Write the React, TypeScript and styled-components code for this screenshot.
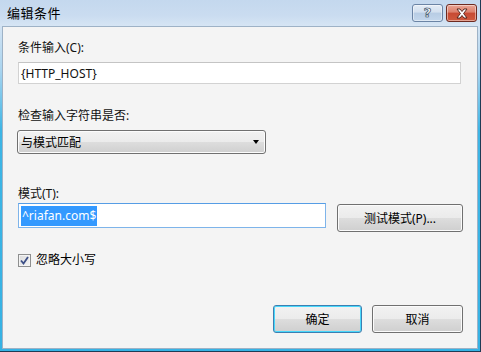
import React from 'react';
import styled, { createGlobalStyle } from 'styled-components';

const GlobalStyle = createGlobalStyle`
  html, body {
    margin: 0;
    padding: 0;
    background: #ffffff;
  }
  body {
    font-family: 'Noto Sans', 'Noto Sans CJK SC', sans-serif;
    font-size: 12px;
    color: #000;
  }
`;

const Window = styled.div`
  width: 481px;
  height: 352px;
  box-sizing: border-box;
  display: flex;
  flex-direction: column;
  border-right: 1px solid #1f3b55;
  border-bottom: 1px solid #1f3b55;
  background: linear-gradient(
    180deg,
    #c3d8ee 0px,
    #d3e3f3 26px,
    #a9d4ef 70px,
    #3db5e5 130px,
    #36b2e4 100%
  );
`;

const TitleBar = styled.div`
  height: 26px;
  flex: none;
  display: flex;
  align-items: flex-start;
  justify-content: space-between;
  padding: 0 3px 0 7px;
  background: linear-gradient(180deg, #c4d8ee 0%, #cadcf0 60%, #d6e5f4 100%);
`;

const Title = styled.div`
  font-family: 'Noto Sans CJK SC', sans-serif;
  font-size: 13px;
  line-height: 26px;
  color: #000;
  letter-spacing: 0.5px;
`;

const CaptionButtons = styled.div`
  display: flex;
  gap: 3px;
  margin-top: 4px;
`;

const CaptionButton = styled.div<{ $close?: boolean }>`
  width: 31px;
  height: 18px;
  box-sizing: border-box;
  border-radius: 3px;
  display: flex;
  align-items: center;
  justify-content: center;
  border: 1px solid ${(p) => (p.$close ? '#6d2a20' : '#6b84a5')};
  box-shadow: inset 0 0 0 1px rgba(255, 255, 255, 0.45);
  background: ${(p) =>
    p.$close
      ? 'linear-gradient(180deg, #e9a596 0%, #dc806c 45%, #c74a33 50%, #cf5a3e 100%)'
      : 'linear-gradient(180deg, #e4ecf6 0%, #d3e0ef 45%, #b7cce4 50%, #c4d7ec 100%)'};
`;

const HelpGlyph = styled.span`
  font-family: 'DejaVu Sans', sans-serif;
  font-weight: bold;
  font-size: 13px;
  line-height: 14px;
  color: #ffffff;
  -webkit-text-stroke: 0.6px #3b4c66;
  text-shadow: 0 0 1px #3b4c66;
`;

const Client = styled.div`
  flex: 1;
  margin: 0 2px 2px 2px;
  border: 1px solid #9eb2c6;
  background: #f4f4f4;
  display: flex;
  flex-direction: column;
  padding: 13px 14px 15px 15px;
`;

const Label = styled.div<{ $gap: number }>`
  margin-top: ${(p) => p.$gap}px;
  height: 16px;
  line-height: 16px;
  font-size: 12px;
  color: #111;
`;

const TextBox = styled.div<{ $focused?: boolean; $width?: number; $height: number }>`
  box-sizing: border-box;
  height: ${(p) => p.$height}px;
  width: ${(p) => (p.$width ? `${p.$width}px` : 'auto')};
  background: #ffffff;
  border: 1px solid ${(p) => (p.$focused ? '#7eb4ea' : '#d2d2d2')};
  border-top-color: ${(p) => (p.$focused ? '#569de5' : '#c4c4c4')};
  display: flex;
  align-items: center;
  padding-left: 2px;
  font-size: 12px;
  color: #111;
`;

const FirstBox = styled(TextBox)`
  margin-top: 6px;
  margin-right: 2px;
`;

const Selected = styled.span`
  display: inline-block;
  height: 20px;
  line-height: 20px;
  padding: 0 1px;
  background: #3399ff;
  color: #ffffff;
`;

const Combo = styled.div`
  margin-top: 6px;
  width: 249px;
  margin-left: -1px;
  height: 24px;
  box-sizing: border-box;
  border: 1px solid #707070;
  border-radius: 3px;
  box-shadow: inset 0 0 0 1px #fcfcfc;
  background: linear-gradient(180deg, #f2f2f2 0%, #ebebeb 50%, #dddddd 51%, #cfcfcf 100%);
  display: flex;
  align-items: center;
  justify-content: space-between;
  padding: 0 6px 0 3px;
  font-size: 12px;
`;

const Arrow = styled.span`
  width: 0;
  height: 0;
  border-left: 3.5px solid transparent;
  border-right: 3.5px solid transparent;
  border-top: 4px solid #000;
`;

const PatternRow = styled.div`
  margin-top: 1px;
  display: flex;
  align-items: flex-start;
`;

const Button = styled.div<{ $width: number; $default?: boolean }>`
  width: ${(p) => p.$width}px;
  height: 28px;
  box-sizing: border-box;
  border: 1px solid ${(p) => (p.$default ? '#3c7fb1' : '#707070')};
  border-radius: 3px;
  box-shadow: inset 0 0 0 1px ${(p) => (p.$default ? '#48d8fb' : '#fbfbfb')};
  background: linear-gradient(180deg, #f2f2f2 0%, #ebebeb 50%, #dddddd 51%, #cfcfcf 100%);
  display: flex;
  align-items: center;
  justify-content: center;
  font-size: 12px;
  color: #000;
`;

const TestButton = styled(Button)`
  margin-left: auto;
  margin-top: 1px;
`;

const CheckRow = styled.div`
  margin-top: 21px;
  display: flex;
  align-items: center;
  height: 14px;
`;

const CheckBox = styled.div`
  width: 13px;
  height: 13px;
  box-sizing: border-box;
  border: 1px solid #8e8f8f;
  background: linear-gradient(135deg, #dcdcdc 0%, #f4f4f4 100%);
  box-shadow: inset 0 0 0 1px #f4f4f4;
  display: flex;
  align-items: center;
  justify-content: center;
`;

const CheckLabel = styled.span`
  margin-left: 5px;
  line-height: 14px;
  font-size: 12px;
`;

const Footer = styled.div`
  margin-top: auto;
  display: flex;
  justify-content: flex-end;
  gap: 10px;
`;

export default function App(): JSX.Element {
  return (
    <>
      <GlobalStyle />
      <Window>
        <TitleBar>
          <Title>编辑条件</Title>
          <CaptionButtons>
            <CaptionButton>
              <HelpGlyph>?</HelpGlyph>
            </CaptionButton>
            <CaptionButton $close>
              <svg width="14" height="11" viewBox="0 0 14 11">
                <path
                  d="M2 1 L5 1 L7 3.5 L9 1 L12 1 L8.6 5.5 L12 10 L9 10 L7 7.5 L5 10 L2 10 L5.4 5.5 Z"
                  fill="#ffffff"
                  stroke="#4a1d15"
                  strokeWidth="0.9"
                  strokeLinejoin="round"
                />
              </svg>
            </CaptionButton>
          </CaptionButtons>
        </TitleBar>
        <Client>
          <Label $gap={0}>条件输入(C):</Label>
          <FirstBox $height={22}>{'{HTTP_HOST}'}</FirstBox>
          <Label $gap={24}>检查输入字符串是否:</Label>
          <Combo>
            <span>与模式匹配</span>
            <Arrow />
          </Combo>
          <Label $gap={32}>模式(T):</Label>
          <PatternRow>
            <TextBox $focused $width={308} $height={25}>
              <Selected>^riafan.com$</Selected>
            </TextBox>
            <TestButton $width={126}>测试模式(P)...</TestButton>
          </PatternRow>
          <CheckRow>
            <CheckBox>
              <svg width="9" height="9" viewBox="0 0 9 9">
                <path
                  d="M1 4.5 L3.5 7.5 L8 1"
                  fill="none"
                  stroke="#3c4f86"
                  strokeWidth="1.8"
                />
              </svg>
            </CheckBox>
            <CheckLabel>忽略大小写</CheckLabel>
          </CheckRow>
          <Footer>
            <Button $width={89} $default>
              确定
            </Button>
            <Button $width={91}>取消</Button>
          </Footer>
        </Client>
      </Window>
    </>
  );
}
